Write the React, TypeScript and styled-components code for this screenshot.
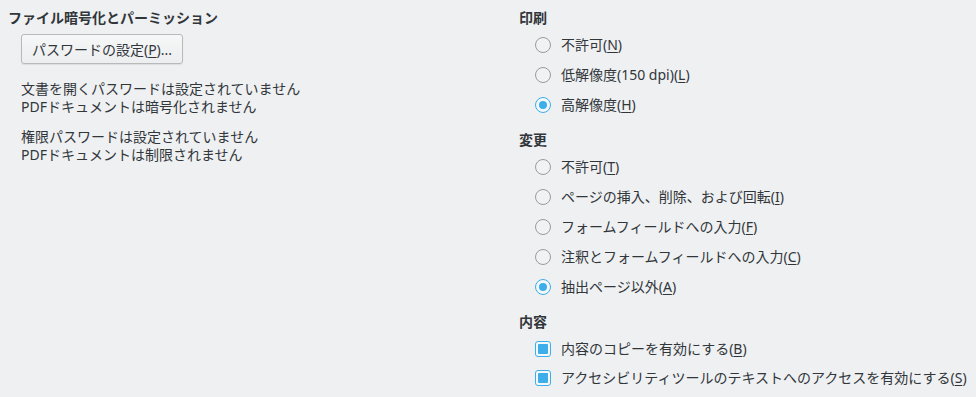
import React from 'react';
import styled, { createGlobalStyle } from 'styled-components';

const GlobalStyle = createGlobalStyle`
  html, body {
    margin: 0;
    padding: 0;
    background: #eff0f1;
  }
  body {
    font-family: "Noto Sans", "Noto Sans CJK JP", sans-serif;
    font-size: 14px;
    color: #31363b;
  }
`;

const Page = styled.div`
  width: 976px;
  height: 397px;
  box-sizing: border-box;
  padding: 8px 0 0 8px;
  display: grid;
  grid-template-columns: 511px 1fr;
  background: #eff0f1;
`;

const Column = styled.div`
  display: flex;
  flex-direction: column;
`;

const Heading = styled.div`
  font-weight: 700;
  line-height: 20px;
  height: 20px;
`;

const Indented = styled.div`
  padding-left: 13px;
  display: flex;
  flex-direction: column;
  align-items: flex-start;
`;

const Button = styled.button`
  margin-top: 6px;
  height: 30px;
  width: 162px;
  box-sizing: border-box;
  border: 1px solid #b7b9bb;
  border-radius: 3px;
  background: linear-gradient(#f6f7f7, #eceeef);
  box-shadow: 0 1px 1px rgba(0, 0, 0, 0.08);
  font: inherit;
  color: #31363b;
  padding: 0;
  white-space: nowrap;
  display: flex;
  align-items: center;
  justify-content: center;
`;

const Note = styled.p<{ $first?: boolean }>`
  margin: ${(p) => (p.$first ? '16px' : '12px')} 0 0;
  line-height: 18px;
`;

const Section = styled.div`
  display: flex;
  flex-direction: column;
  margin-bottom: 10px;
`;

const Options = styled.div`
  margin-top: 2px;
  display: flex;
  flex-direction: column;
`;

const Row = styled.label<{ $tight?: boolean }>`
  height: ${(p) => (p.$tight ? '29px' : '30px')};
  display: flex;
  align-items: center;
  padding-left: 16px;
  gap: 10px;
  line-height: 18px;
`;

const RadioMark = styled.span<{ $on?: boolean }>`
  width: 16px;
  height: 16px;
  box-sizing: border-box;
  border-radius: 50%;
  border: 1px solid ${(p) => (p.$on ? '#3daee9' : '#999b9d')};
  background: ${(p) => (p.$on ? '#f3f8fb' : '#f1f2f3')};
  display: flex;
  align-items: center;
  justify-content: center;
  flex: none;
  &::after {
    content: '';
    display: ${(p) => (p.$on ? 'block' : 'none')};
    width: 8px;
    height: 8px;
    border-radius: 50%;
    background: #3daee9;
  }
`;

const CheckMark = styled.span`
  width: 16px;
  height: 16px;
  box-sizing: border-box;
  border-radius: 3px;
  border: 1px solid #3daee9;
  background: #f3f8fb;
  display: flex;
  align-items: center;
  justify-content: center;
  flex: none;
  &::after {
    content: '';
    width: 10px;
    height: 10px;
    border-radius: 1px;
    background: #3daee9;
  }
`;

const Key = styled.span`
  text-decoration: underline;
  text-underline-offset: 2px;
`;

function Label({ text, k }: { text: string; k: string }) {
  return (
    <span>
      {text}(<Key>{k}</Key>)
    </span>
  );
}

type Opt = { text: string; k: string; on?: boolean };

const printing: Opt[] = [
  { text: '不許可', k: 'N' },
  { text: '低解像度(150 dpi)', k: 'L' },
  { text: '高解像度', k: 'H', on: true },
];

const changes: Opt[] = [
  { text: '不許可', k: 'T' },
  { text: 'ページの挿入、削除、および回転', k: 'I' },
  { text: 'フォームフィールドへの入力', k: 'F' },
  { text: '注釈とフォームフィールドへの入力', k: 'C' },
  { text: '抽出ページ以外', k: 'A', on: true },
];

const content: Opt[] = [
  { text: '内容のコピーを有効にする', k: 'B' },
  { text: 'アクセシビリティツールのテキストへのアクセスを有効にする', k: 'S' },
];

function RadioGroup({ title, items }: { title: string; items: Opt[] }) {
  return (
    <Section>
      <Heading>{title}</Heading>
      <Options>
        {items.map((o) => (
          <Row key={o.k}>
            <RadioMark $on={o.on} />
            <Label text={o.text} k={o.k} />
          </Row>
        ))}
      </Options>
    </Section>
  );
}

export default function App() {
  return (
    <>
      <GlobalStyle />
      <Page>
        <Column>
          <Heading>ファイル暗号化とパーミッション</Heading>
          <Indented>
            <Button>
              パスワードの設定(<Key>P</Key>)...
            </Button>
            <Note $first>
              文書を開くパスワードは設定されていません
              <br />
              PDFドキュメントは暗号化されません
            </Note>
            <Note>
              権限パスワードは設定されていません
              <br />
              PDFドキュメントは制限されません
            </Note>
          </Indented>
        </Column>
        <Column>
          <RadioGroup title="印刷" items={printing} />
          <RadioGroup title="変更" items={changes} />
          <Section>
            <Heading>内容</Heading>
            <Options>
              {content.map((o) => (
                <Row key={o.k} $tight>
                  <CheckMark />
                  <Label text={o.text} k={o.k} />
                </Row>
              ))}
            </Options>
          </Section>
        </Column>
      </Page>
    </>
  );
}
